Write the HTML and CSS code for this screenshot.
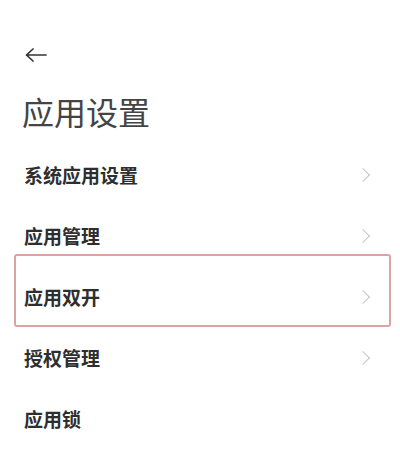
FILE: index.html
```html
<!DOCTYPE html>
<html lang="zh-CN">
<head>
    <meta charset="UTF-8">
    <meta name="viewport" content="width=device-width, initial-scale=1.0">
    <title>应用设置</title>
    <link rel="stylesheet" href="styles.css">
</head>
<body>
    <div class="page">
        <div class="statusbar"></div>
        <div class="back">
            <svg width="22" height="14" viewBox="0 0 22 14">
                <path d="M1.5 7 H21 M8 1 L1.5 7 L8 13" fill="none" stroke="#333" stroke-width="1.7" stroke-linecap="round" stroke-linejoin="round"/>
            </svg>
        </div>
        <h1 class="title">应用设置</h1>
        <ul class="menu">
            <li class="item"><span>系统应用设置</span><i class="chev"></i></li>
            <li class="item"><span>应用管理</span><i class="chev"></i></li>
            <li class="item marked"><span>应用双开</span><i class="chev"></i></li>
            <li class="item"><span>授权管理</span><i class="chev"></i></li>
            <li class="item last"><span>应用锁</span></li>
        </ul>
    </div>
</body>
</html>
```

FILE: styles.css
```css
body {
    margin: 0;
    background: #fff;
    font-family: "Noto Sans CJK SC", "Noto Sans", sans-serif;
}
.page {
    width: 400px;
    height: 472px;
    overflow: hidden;
}
.statusbar {
    height: 40px;
}
.back {
    height: 30px;
    padding-left: 25px;
    display: flex;
    align-items: center;
}
.back svg {
    display: block;
}
.title {
    margin: 19px 0 0 22px;
    font-size: 32px;
    line-height: 44px;
    font-weight: 400;
    color: #444;
}
.menu {
    list-style: none;
    margin: 11px 0 0 0;
    padding: 0;
}
.item {
    height: 61px;
    box-sizing: border-box;
    padding: 0 29px 0 24px;
    display: flex;
    align-items: center;
    justify-content: space-between;
    font-size: 19px;
    font-weight: 700;
    color: #2e2e2e;
}
.item.marked {
    height: 73px;
    margin: -12px 9px 0 14px;
    padding: 12px 18px 0 8px;
    border: 2px solid #dba3a3;
    border-radius: 3px;
}
.chev {
    width: 9px;
    height: 9px;
    border-right: 1.5px solid #c6c6c6;
    border-top: 1.5px solid #c6c6c6;
    transform: rotate(45deg);
    margin-right: 3px;
}
```
